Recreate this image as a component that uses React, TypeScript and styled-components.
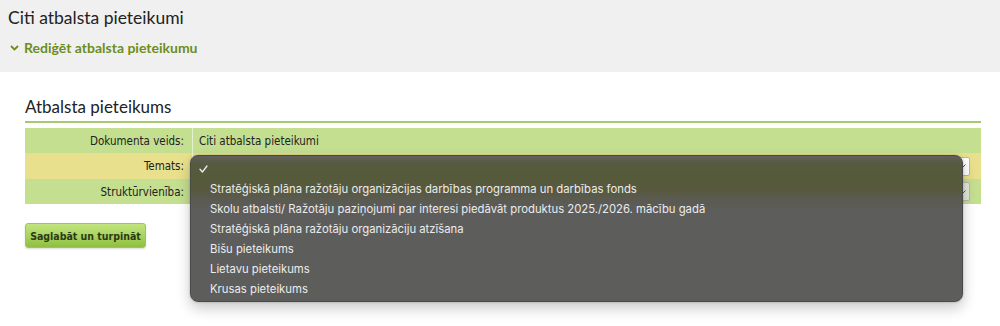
import styled, { createGlobalStyle } from 'styled-components';

const GlobalStyle = createGlobalStyle`
  body {
    margin: 0;
    background: #ffffff;
    font-family: Lato, 'Liberation Sans', sans-serif;
  }
  #root {
    min-height: 326px;
  }
`;

const PageHeader = styled.div`
  background: #f0f0f0;
  height: 72px;
  padding: 6px 8px 0 8px;
  box-sizing: border-box;
`;

const PageTitle = styled.h1`
  margin: 0;
  font-size: 17.5px;
  font-weight: 400;
  color: #222;
  line-height: 24px;
`;

const EditToggle = styled.div`
  display: flex;
  align-items: center;
  gap: 5px;
  margin-top: 9px;
  padding-left: 2px;
  color: #6b8e23;
  font-size: 14px;
  font-weight: 700;
`;

const Section = styled.div`
  padding: 24px 19px 0 25px;
`;

const SectionTitle = styled.h2`
  margin: 0;
  font-size: 17px;
  font-weight: 400;
  color: #222;
  line-height: 22px;
  padding-bottom: 3px;
  border-bottom: 2px solid #a6c96c;
`;

const Table = styled.div`
  margin-top: 5px;
  font-family: 'DejaVu Sans Condensed', 'Liberation Sans', sans-serif;
  font-size: 11.5px;
  color: #222;
`;

const Row = styled.div<{ $tone: 'green' | 'yellow' }>`
  display: grid;
  grid-template-columns: 167px 1fr;
  min-height: ${({ $tone }) => ($tone === 'yellow' ? 26 : 25)}px;
  background: ${({ $tone }) => ($tone === 'yellow' ? '#e8e08c' : '#c4df90')};
`;

const Label = styled.div`
  display: flex;
  align-items: center;
  justify-content: flex-end;
  padding-right: 8px;
`;

const Value = styled.div`
  position: relative;
  display: flex;
  align-items: center;
  padding: 0 11px 0 6px;
  border-left: 1px solid rgba(255, 255, 255, 0.55);
`;

const SelectBox = styled.div<{ $disabled?: boolean }>`
  flex: 1;
  height: 19px;
  box-sizing: border-box;
  border: 1px solid #b9b9a8;
  border-radius: 2px;
  background: ${({ $disabled }) => ($disabled ? '#e4e7da' : '#ffffff')};
  display: flex;
  justify-content: flex-end;
  align-items: center;
  padding-right: 3px;
  color: #555;
`;

const SaveButton = styled.button`
  margin: 19px 0 0 25px;
  width: 121px;
  height: 25px;
  border: 1px solid #9cc65a;
  border-radius: 3px;
  background: linear-gradient(to bottom, #c2e47f 0%, #a9d461 50%, #8fbf3f 100%);
  box-shadow: 0 1px 2px rgba(0, 0, 0, 0.15);
  font-family: 'DejaVu Sans Condensed', 'Liberation Sans', sans-serif;
  font-size: 10.5px;
  font-weight: 700;
  color: #2c3a14;
  padding: 0;
  white-space: nowrap;
`;

const Dropdown = styled.div`
  position: absolute;
  left: -3px;
  top: 2px;
  width: 773px;
  padding: 3px 0 2px 0;
  box-sizing: border-box;
  border-radius: 8px;
  border: 1px solid #4a4a48;
  background: linear-gradient(
    to bottom,
    #60605a 0px,
    #575a40 8px,
    #555a3a 22px,
    #58593f 34px,
    #5b5b55 46px,
    #5d5d5c 56px,
    #5d5d5c 100%
  );
  box-shadow: 0 6px 14px rgba(0, 0, 0, 0.22), 0 0 2px rgba(0, 0, 0, 0.3);
  font-family: Inter, 'Noto Sans', sans-serif;
  font-size: 11.3px;
  color: #ececec;
  z-index: 10;
`;

const Option = styled.div`
  height: 20px;
  display: flex;
  align-items: center;
  padding-left: 19px;
  position: relative;
  white-space: nowrap;
`;

const CheckMark = styled.svg`
  position: absolute;
  left: 8px;
  top: 6px;
`;

const options = [
  'Stratēģiskā plāna ražotāju organizācijas darbības programma un darbības fonds',
  'Skolu atbalsti/ Ražotāju paziņojumi par interesi piedāvāt produktus 2025./2026. mācību gadā',
  'Stratēģiskā plāna ražotāju organizāciju atzīšana',
  'Bišu pieteikums',
  'Lietavu pieteikums',
  'Krusas pieteikums',
];

const Chevron = () => (
  <svg width="9" height="6" viewBox="0 0 9 6">
    <path d="M1 1l3.5 3.5L8 1" fill="none" stroke="#6b8e23" strokeWidth="1.8" />
  </svg>
);

const SmallChevron = () => (
  <svg width="6" height="4" viewBox="0 0 6 4">
    <path d="M0.5 0.5l2.5 2.5 2.5-2.5" fill="none" stroke="#555" strokeWidth="1" />
  </svg>
);

const App = () => {
  return (
    <>
      <GlobalStyle />
      <PageHeader>
        <PageTitle>Citi atbalsta pieteikumi</PageTitle>
        <EditToggle>
          <Chevron />
          Rediģēt atbalsta pieteikumu
        </EditToggle>
      </PageHeader>

      <Section>
        <SectionTitle>Atbalsta pieteikums</SectionTitle>
        <Table>
          <Row $tone="green">
            <Label>Dokumenta veids:</Label>
            <Value>Citi atbalsta pieteikumi</Value>
          </Row>
          <Row $tone="yellow">
            <Label>Temats:</Label>
            <Value>
              <SelectBox>
                <SmallChevron />
              </SelectBox>
              <Dropdown>
                <Option>
                  <CheckMark width="9" height="8" viewBox="0 0 9 8">
                    <path d="M1 4.3l2.4 2.7L8 1" fill="none" stroke="#ececec" strokeWidth="1.3" strokeLinecap="round" strokeLinejoin="round" />
                  </CheckMark>
                </Option>
                {options.map((o) => (
                  <Option key={o}>{o}</Option>
                ))}
              </Dropdown>
            </Value>
          </Row>
          <Row $tone="green">
            <Label>Struktūrvienība:</Label>
            <Value>
              <SelectBox $disabled>
                <SmallChevron />
              </SelectBox>
            </Value>
          </Row>
        </Table>
      </Section>

      <SaveButton>Saglabāt un turpināt</SaveButton>
    </>
  );
};

export default App;
